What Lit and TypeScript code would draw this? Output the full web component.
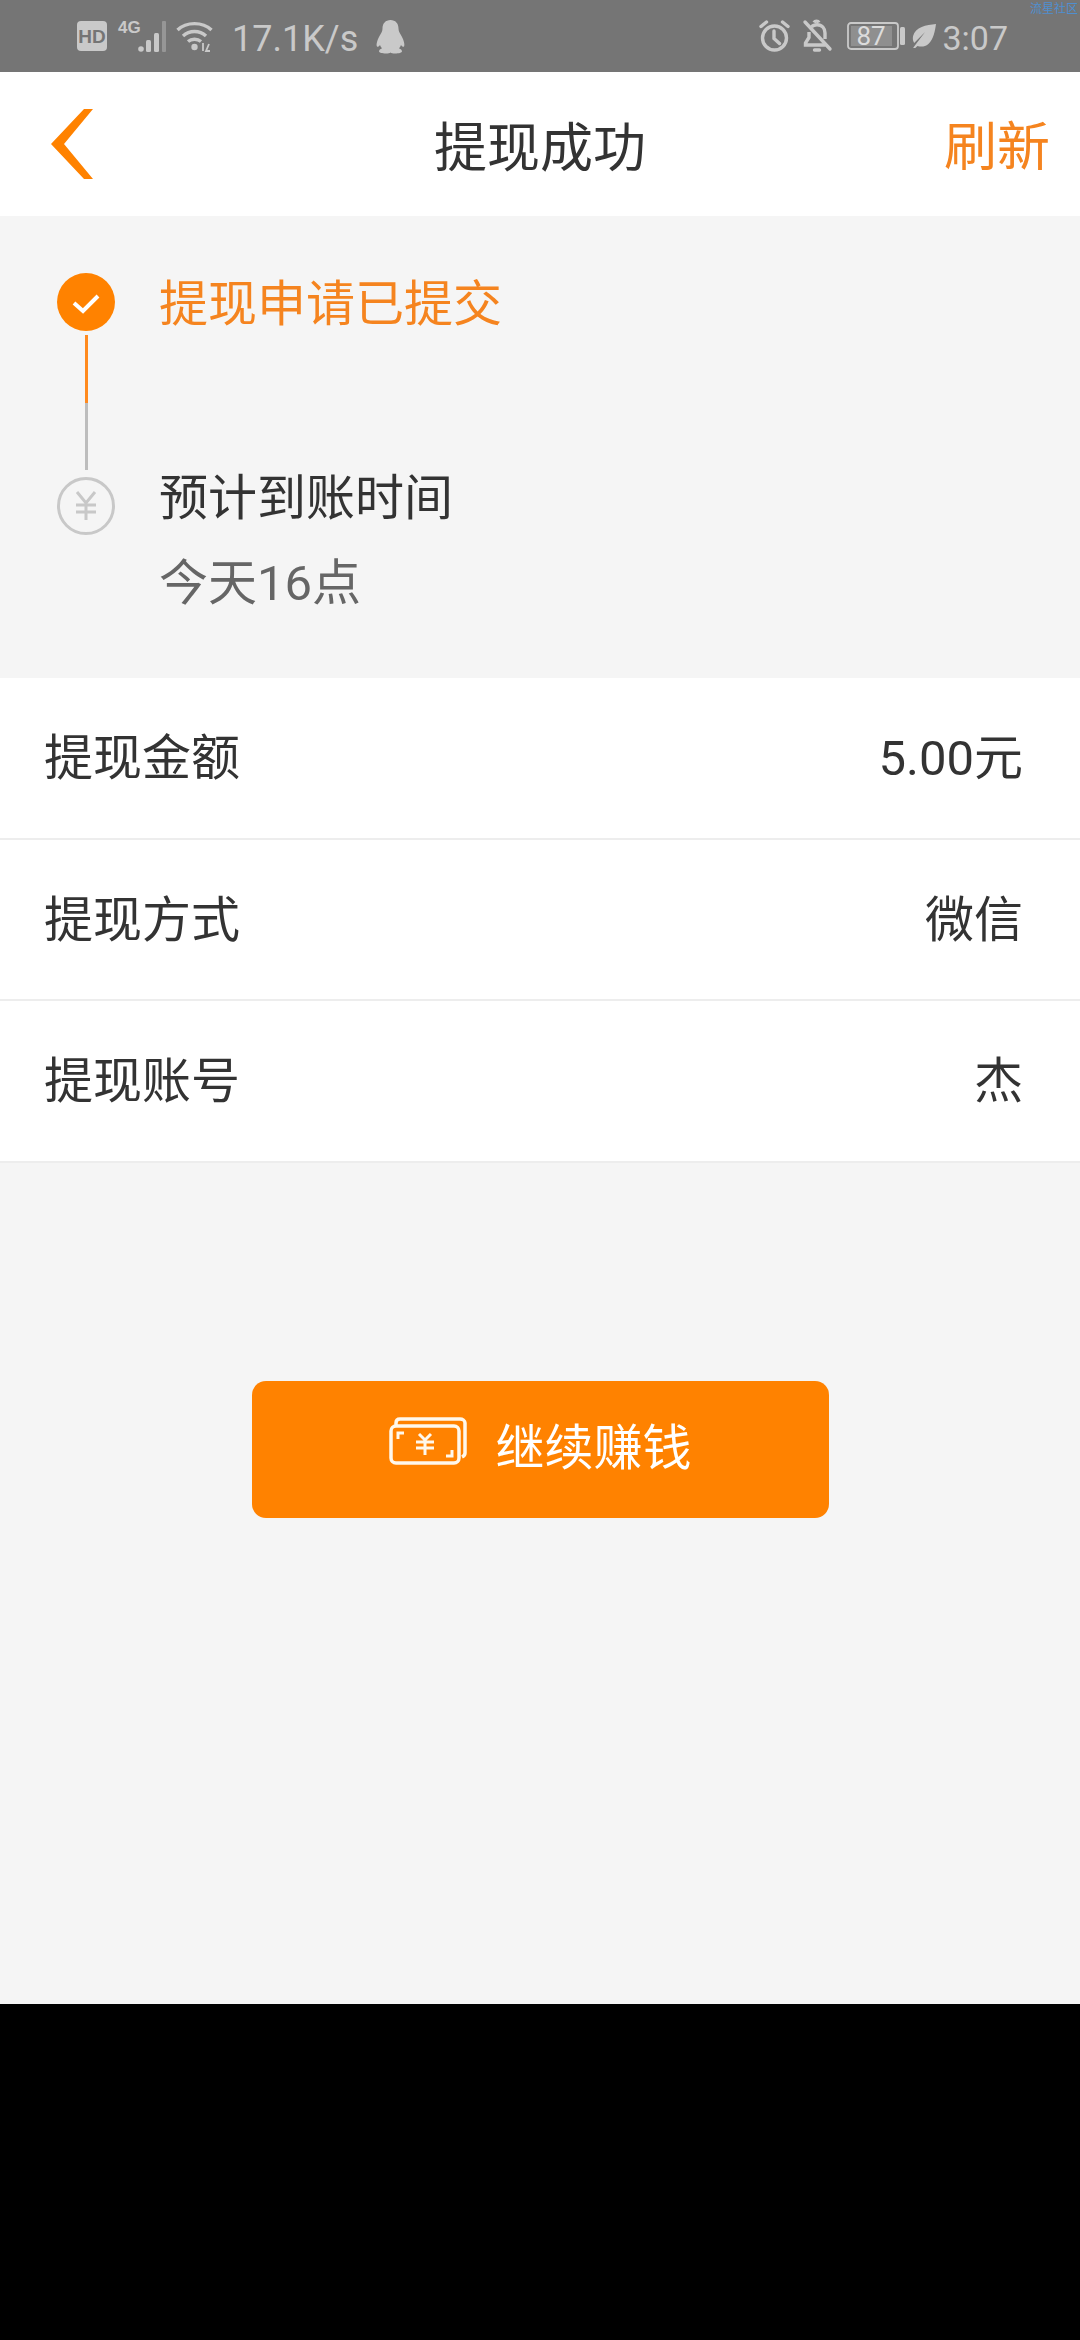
import { LitElement, html, css, svg } from "lit";
import { customElement } from "lit/decorators.js";

const rows = [
  ["提现金额", "5.00元"],
  ["提现方式", "微信"],
  ["提现账号", "杰"],
];

@customElement("app-root")
export class AppRoot extends LitElement {
  static styles = css`
    :host {
      display: block;
      width: 1080px;
      height: 2340px;
      background: #000;
      font-family: Roboto, "Noto Sans CJK SC", sans-serif;
      overflow: hidden;
    }
    .status {
      position: relative;
      height: 72px;
      background: #757575;
      display: flex;
      justify-content: space-between;
      align-items: center;
      color: #c9c9c9;
      padding: 0 72px 0 77px;
      box-sizing: border-box;
    }
    .group { display: flex; align-items: center; }
    .group svg { display: block; flex: none; overflow: visible; }
    .speed { font-size: 36px; line-height: 44px; margin: 6px 0 0 19px; }
    .time { font-size: 34px; line-height: 44px; margin: 4px 0 0 6px; }
    .ml11 { margin-left: 11px; }
    .ml8 { margin-left: 8px; }
    .ml18 { margin-left: 18px; }
    .ml13 { margin-left: 13px; }
    .ml16 { margin-left: 16px; }
    .ml7 { margin-left: 7px; }
    .label {
      font-family: "Liberation Sans", sans-serif;
      font-weight: 700;
    }
    .mark {
      position: absolute;
      top: 0;
      right: 2px;
      font-size: 12px;
      line-height: 16px;
      color: #4f8fd0;
      font-family: "Noto Sans CJK SC", sans-serif;
    }
    .nav {
      height: 144px;
      background: #fff;
      display: grid;
      grid-template-columns: 1fr auto 1fr;
      align-items: center;
    }
    .back { display: block; margin-left: 51px; }
    .title { font-size: 53px; color: #333; line-height: 80px; margin-top: 10px; }
    .refresh { justify-self: end; margin: 8px 30px 0 0; font-size: 53px; color: #f5841f; line-height: 80px; }
    .main {
      height: 1788px;
      background: #f5f5f5;
      display: flex;
      flex-direction: column;
    }
    .steps {
      height: 462px;
      box-sizing: border-box;
      padding: 57px 0 0 57px;
      display: flex;
      gap: 44px;
    }
    .rail { display: flex; flex-direction: column; align-items: center; width: 58px; }
    .rail svg { display: block; }
    .line { width: 3px; }
    .line.on { height: 68px; background: #ff8a1f; margin-top: 4px; }
    .line.off { height: 67px; background: #bdbdbd; margin-bottom: 7px; }
    .texts { display: flex; flex-direction: column; font-size: 49px; line-height: 60px; }
    .t1 { color: #f5841f; margin-top: 2px; }
    .t2 { color: #333; margin-top: 134px; }
    .t3 { color: #666; margin-top: 25px; }
    .list { display: flex; flex-direction: column; }
    .row {
      height: 161.5px;
      box-sizing: border-box;
      background: #fff;
      border-bottom: 2.5px solid #ededed;
      display: flex;
      justify-content: space-between;
      align-items: center;
      padding: 0 57px 8px 44px;
      font-size: 49px;
      color: #333;
    }
    .btn {
      align-self: center;
      margin: 218px 0 0 1px;
      width: 577px;
      height: 137px;
      border-radius: 14px;
      background: #ff8200;
      color: #fff;
      font-size: 49px;
      display: flex;
      align-items: center;
      justify-content: center;
      gap: 28px;
      box-sizing: border-box;
    }
    .btn svg { display: block; margin-top: -16px; }
    .btn span { margin-top: -12px; }
  `;

  private signal() {
    return svg`
      <text class="label" x="0" y="13" font-size="17" fill="currentColor">4G</text>
      <circle cx="23" cy="29" r="2.800" fill="currentColor"/>
      <rect x="28" y="20" width="5" height="12" rx="1.500" fill="currentColor"/>
      <rect x="36" y="13" width="5" height="19" rx="1.500" fill="currentColor"/>
      <rect x="44" y="1" width="4" height="31" rx="1" fill="currentColor" opacity=".4"/>`;
  }

  render() {
    return html`
      <div class="status">
        <div class="group">
          <svg width="30" height="30" viewBox="0 0 30 30">
            <rect width="30" height="30" rx="4" fill="currentColor"/>
            <text class="label" x="15" y="22" font-size="19" text-anchor="middle" fill="#757575">HD</text>
          </svg>
          <svg class="ml11" width="50" height="33" viewBox="0 0 50 33">${this.signal()}</svg>
          <svg class="ml8" width="37" height="31" viewBox="0 0 37 31" fill="none" stroke="currentColor" stroke-width="3.400">
            <path d="M1.500 9C10.500 .5 26.500 .5 35.500 9M7 15c6.500-6 16.500-6 23 0M12 20.500c3.500-3 9.500-3 13 0"/>
            <circle cx="18.500" cy="26" r="3.200" fill="currentColor" stroke="none"/>
            <path d="M27 22v8M33 23l-3 7h4" stroke-width="1.800"/>
          </svg>
          <span class="speed">17.1K/s</span>
          <svg class="ml18" width="29" height="33" viewBox="0 0 29 33" fill="currentColor">
            <path d="M14.500 0c5 0 8 3.500 8 8.500 0 2.500 1 4 3 7.500 2.500 4.500 3.500 9 2.500 10.500-.6.800-2 0-3-1.500-.4 1.300-1 2.300-2 3.200 1.700.8 3 1.800 3 3 0 1.300-3 2.300-7 2.300-2.200 0-3.700-.3-4.500-1-.8.700-2.300 1-4.500 1-4 0-7-1-7-2.300 0-1.200 1.300-2.200 3-3-1-.9-1.600-1.900-2-3.200-1 1.500-2.400 2.300-3 1.500-1-1.500 0-6 2.500-10.500 2-3.500 3-5 3-7.500 0-5 3-8.500 8-8.500z"/>
          </svg>
        </div>
        <div class="group">
          <svg width="31" height="32" viewBox="0 0 31 32" fill="none" stroke="currentColor" stroke-width="3.400">
            <circle cx="15.500" cy="18" r="12"/>
            <path d="M15 11v7.500l5.500 5M2 6.500 7.500 2M29 6.500 23.500 2" stroke-linecap="round"/>
          </svg>
          <svg class="ml13" width="28" height="32" viewBox="0 0 28 32" fill="none" stroke="currentColor" stroke-width="3.400">
            <path d="M8.500 7c1.300-1.500 3-2.300 5.500-2.300 5 0 8 3.500 8 8.300v6M6 12v5.500L2.500 23v2h20"/>
            <path d="M11 2.500c1-1.800 4-1.800 5 0" />
            <path d="M2 2 27 29" stroke-linecap="round"/>
            <path d="M11.500 30h5" stroke-linecap="round"/>
          </svg>
          <svg class="ml16" width="58" height="28" viewBox="0 0 58 28">
            <rect x="1" y="1" width="50" height="26" rx="3" fill="none" stroke="currentColor" stroke-width="1.800"/>
            <rect x="4" y="4" width="41" height="20" fill="#8f8f8f"/>
            <rect x="53" y="5" width="5" height="18" rx="1.500" fill="currentColor"/>
            <text x="24" y="23" font-size="26" text-anchor="middle" fill="#dcdcdc" font-family="Roboto, sans-serif">87</text>
          </svg>
          <svg class="ml7" width="24" height="24" viewBox="0 0 22 24" preserveAspectRatio="none" fill="currentColor">
            <path d="M22 0C13 1 3 3 1 12c-.6 3 0 5 1 7L12 8 3 21l-2 3 2 0 2-2c3 1 7 1 10-2 5-5 6-13 7-20z"/>
          </svg>
          <span class="time">3:07</span>
        </div>
        <div class="mark">流星社区</div>
      </div>
      <div class="nav">
        <svg class="back" width="42" height="70" viewBox="0 0 42 70">
          <path d="M42 0H33L0 35 33 70H42L13 35z" fill="#ff8200"/>
        </svg>
        <div class="title">提现成功</div>
        <div class="refresh">刷新</div>
      </div>
      <div class="main">
        <div class="steps">
          <div class="rail">
            <svg width="58" height="58" viewBox="0 0 58 58">
              <circle cx="29" cy="29" r="29" fill="#ff8200"/>
              <path d="M17 30l9 8 15-15" fill="none" stroke="#fff" stroke-width="4"/>
            </svg>
            <div class="line on"></div>
            <div class="line off"></div>
            <svg width="58" height="58" viewBox="0 0 58 58" fill="none" stroke="#c8c8c8">
              <circle cx="29" cy="29" r="27.500" stroke-width="3"/>
              <path d="M20 15l9 11 9-11M19 28h20M19 35h20M29 26v17" stroke-width="3"/>
            </svg>
          </div>
          <div class="texts">
            <div class="t1">提现申请已提交</div>
            <div class="t2">预计到账时间</div>
            <div class="t3">今天16点</div>
          </div>
        </div>
        <div class="list">
          ${rows.map(([k, v]) => html`<div class="row"><span>${k}</span><span>${v}</span></div>`)}
        </div>
        <div class="btn">
          <svg width="78" height="48" viewBox="0 0 78 48" fill="none" stroke="#fff8ec" stroke-width="3.500">
            <rect x="2" y="9" width="68" height="37" rx="5"/>
            <path d="M7 8V6c0-2.500 1.500-4 4-4h60c2.500 0 5 1.500 5 4v30c0 2-1 3-3 4"/>
            <path d="M9 22v-6h6M63 33v6h-6" stroke-width="3"/>
            <path d="M30 17l6 6 6-6M27 25h18M27 31h18M36 24v14" stroke-width="3"/>
          </svg>
          <span>继续赚钱</span>
        </div>
      </div>
    `;
  }
}
